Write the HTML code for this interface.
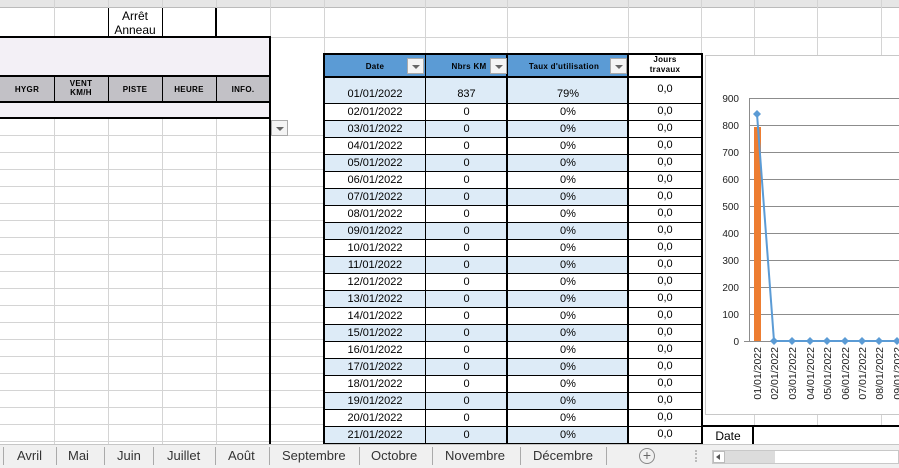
<!DOCTYPE html>
<html><head><meta charset="utf-8"><style>
*{margin:0;padding:0;box-sizing:border-box}
body{width:899px;height:468px;overflow:hidden;background:#fff;font-family:"Liberation Sans",Arial,sans-serif;position:relative}
.a{position:absolute}
.vl{position:absolute;width:1px;background:#d4d4d4}
.hl{position:absolute;height:1px;background:#d4d4d4}
.c{position:absolute;text-align:center;font-size:11px;color:#000;line-height:17px}
.hb{font-weight:bold;font-size:8px;letter-spacing:.3px}
.dd{position:absolute;width:17px;height:16px;background:#f4f4f4;border:1px solid #aaa}
.dd:after{content:"";position:absolute;left:4px;top:6px;border-left:4px solid transparent;border-right:4px solid transparent;border-top:4px solid #666}
.tab{position:absolute;top:448px;font-size:13px;color:#333}
.ts{position:absolute;top:447px;width:1px;height:18px;background:#aaa}
.col{position:absolute;top:104px;text-align:center;font-size:11px;line-height:17px}
</style></head><body>
<div class="a" style="left:0;top:0;width:899px;height:8px;background:#e6e6e6;border-bottom:1px solid #bbb"></div>
<div class="vl" style="left:54px;top:0;height:444px"></div>
<div class="vl" style="left:108px;top:0;height:444px"></div>
<div class="vl" style="left:162px;top:0;height:444px"></div>
<div class="vl" style="left:216px;top:0;height:444px"></div>
<div class="vl" style="left:270px;top:0;height:444px"></div>
<div class="vl" style="left:324px;top:0;height:444px"></div>
<div class="vl" style="left:425px;top:0;height:55px"></div>
<div class="vl" style="left:507px;top:0;height:55px"></div>
<div class="vl" style="left:628px;top:0;height:55px"></div>
<div class="vl" style="left:701px;top:0;height:55px"></div>
<div class="vl" style="left:754px;top:0;height:55px"></div>
<div class="vl" style="left:817px;top:0;height:55px"></div>
<div class="vl" style="left:881px;top:0;height:55px"></div>
<div class="hl" style="left:270px;top:37px;width:629px"></div>
<div class="a" style="left:0;top:135px;width:324px;height:309px;background:repeating-linear-gradient(#d4d4d4 0 1px,transparent 1px 17px)"></div>
<div class="a" style="left:108px;top:8px;width:1px;height:29px;background:#000"></div>
<div class="a" style="left:162px;top:8px;width:1px;height:29px;background:#000"></div>
<div class="a" style="left:215px;top:8px;width:2px;height:29px;background:#000"></div>
<div class="c" style="left:108px;top:9px;width:54px;font-size:12px;line-height:14px">Arrêt<br>Anneau</div>
<div class="a" style="left:0;top:36px;width:271px;height:83px;background:#f3f0f6;border:2px solid #000;border-left:none"></div>
<div class="a" style="left:0;top:75px;width:271px;height:28px;background:#c2c1c6;border-top:2px solid #000;border-bottom:2px solid #000;border-right:2px solid #000"></div>
<div class="a" style="left:54px;top:77px;width:1px;height:24px;background:#000"></div>
<div class="a" style="left:108px;top:77px;width:1px;height:24px;background:#000"></div>
<div class="a" style="left:162px;top:77px;width:1px;height:24px;background:#000"></div>
<div class="a" style="left:216px;top:77px;width:1px;height:24px;background:#000"></div>
<div class="c hb" style="left:0;top:81px;width:54px">HYGR</div>
<div class="c hb" style="left:54px;top:79px;width:54px;line-height:9px">VENT<br>KM/H</div>
<div class="c hb" style="left:108px;top:81px;width:54px">PISTE</div>
<div class="c hb" style="left:162px;top:81px;width:54px">HEURE</div>
<div class="c hb" style="left:216px;top:81px;width:54px">INFO.</div>
<div class="a" style="left:269px;top:118px;width:2px;height:326px;background:#000"></div>
<div class="dd" style="left:271px;top:120px"></div>
<div class="a" style="left:323px;top:53px;width:380px;height:391px;border:2px solid #000;border-bottom:none"></div>
<div class="a" style="left:325px;top:55px;width:303px;height:22px;background:#5b9bd5"></div>
<div class="a" style="left:325px;top:77px;width:303px;height:26px;background:#ddebf7"></div>
<div class="a" style="left:325px;top:120px;width:303px;height:324px;background:repeating-linear-gradient(#ddebf7 0 17px,#fff 17px 34px)"></div>
<div class="a" style="left:425px;top:55px;width:1px;height:389px;background:#000"></div>
<div class="a" style="left:506px;top:55px;width:2px;height:389px;background:#000"></div>
<div class="a" style="left:627px;top:55px;width:2px;height:389px;background:#000"></div>
<div class="a" style="left:325px;top:76px;width:376px;height:2px;background:#000"></div>
<div class="dd" style="left:407px;top:58px"></div>
<div class="dd" style="left:490px;top:58px"></div>
<div class="dd" style="left:610px;top:58px"></div>
<div class="c hb" style="left:325px;top:58px;width:100px">Date</div>
<div class="c hb" style="left:426px;top:58px;width:86px">Nbrs KM</div>
<div class="c hb" style="left:508px;top:58px;width:112px">Taux d'utilisation</div>
<div class="c hb" style="left:629px;top:55px;width:72px;line-height:10px">Jours<br>travaux</div>
<div class="c" style="left:325px;top:86px;width:100px">01/01/2022</div><div class="c" style="left:426px;top:86px;width:81px">837</div><div class="c" style="left:508px;top:86px;width:120px">79%</div><div class="c" style="left:629px;top:81px;width:72px">0,0</div>
<div class="a" style="left:325px;top:103px;width:376px;height:341px;background:repeating-linear-gradient(#000 0 1px,transparent 1px 17px)"></div>
<div class="col" style="left:325px;width:100px">02/01/2022<br>03/01/2022<br>04/01/2022<br>05/01/2022<br>06/01/2022<br>07/01/2022<br>08/01/2022<br>09/01/2022<br>10/01/2022<br>11/01/2022<br>12/01/2022<br>13/01/2022<br>14/01/2022<br>15/01/2022<br>16/01/2022<br>17/01/2022<br>18/01/2022<br>19/01/2022<br>20/01/2022<br>21/01/2022</div>
<div class="col" style="left:426px;width:81px">0<br>0<br>0<br>0<br>0<br>0<br>0<br>0<br>0<br>0<br>0<br>0<br>0<br>0<br>0<br>0<br>0<br>0<br>0<br>0</div>
<div class="col" style="left:508px;width:120px">0%<br>0%<br>0%<br>0%<br>0%<br>0%<br>0%<br>0%<br>0%<br>0%<br>0%<br>0%<br>0%<br>0%<br>0%<br>0%<br>0%<br>0%<br>0%<br>0%</div>
<div class="col" style="left:629px;width:72px;top:103px">0,0<br>0,0<br>0,0<br>0,0<br>0,0<br>0,0<br>0,0<br>0,0<br>0,0<br>0,0<br>0,0<br>0,0<br>0,0<br>0,0<br>0,0<br>0,0<br>0,0<br>0,0<br>0,0<br>0,0</div>
<div class="vl" style="left:754px;top:415px;height:12px"></div>
<div class="vl" style="left:817px;top:415px;height:12px"></div>
<div class="vl" style="left:881px;top:415px;height:12px"></div>
<svg class="a" style="left:705px;top:55px" width="194" height="361">
<rect x="0.5" y="0.5" width="200" height="359" fill="#fff" stroke="#c8c8c8"/>
<g stroke="#8c8c8c" stroke-width="1">
<line x1="44" y1="43.5" x2="194" y2="43.5"/><line x1="44" y1="70.5" x2="194" y2="70.5"/><line x1="44" y1="97.5" x2="194" y2="97.5"/><line x1="44" y1="124.5" x2="194" y2="124.5"/><line x1="44" y1="151.5" x2="194" y2="151.5"/><line x1="44" y1="178.5" x2="194" y2="178.5"/><line x1="44" y1="205.5" x2="194" y2="205.5"/><line x1="44" y1="232.5" x2="194" y2="232.5"/><line x1="44" y1="259.5" x2="194" y2="259.5"/><line x1="39" y1="286.5" x2="194" y2="286.5"/>
<line x1="44.5" y1="43" x2="44.5" y2="286"/>
</g>
<g font-size="10" text-anchor="end" fill="#222" font-family="Liberation Sans,sans-serif">
<text x="34" y="47">900</text><text x="34" y="74">800</text><text x="34" y="101">700</text><text x="34" y="128">600</text><text x="34" y="155">500</text><text x="34" y="182">400</text><text x="34" y="209">300</text><text x="34" y="236">200</text><text x="34" y="263">100</text><text x="34" y="290">0</text>
</g>
<rect x="49" y="72" width="7" height="214" fill="#ed7d31"/>
<polyline points="52,59 69,286 87,286 105,286 122,286 140,286 157,286 174,286 192,286" fill="none" stroke="#5b9bd5" stroke-width="2"/>
<g fill="#5b9bd5">
<path d="M52 55l4 4-4 4-4-4z"/><path d="M69 282l4 4-4 4-4-4z"/><path d="M87 282l4 4-4 4-4-4z"/><path d="M105 282l4 4-4 4-4-4z"/><path d="M122 282l4 4-4 4-4-4z"/><path d="M140 282l4 4-4 4-4-4z"/><path d="M157 282l4 4-4 4-4-4z"/><path d="M174 282l4 4-4 4-4-4z"/><path d="M192 282l4 4-4 4-4-4z"/>
</g>
<g font-size="10.5" fill="#222" font-family="Liberation Sans,sans-serif" text-anchor="end">
<text transform="translate(56,292) rotate(-90)">01/01/2022</text>
<text transform="translate(73,292) rotate(-90)">02/01/2022</text>
<text transform="translate(91,292) rotate(-90)">03/01/2022</text>
<text transform="translate(109,292) rotate(-90)">04/01/2022</text>
<text transform="translate(126,292) rotate(-90)">05/01/2022</text>
<text transform="translate(144,292) rotate(-90)">06/01/2022</text>
<text transform="translate(161,292) rotate(-90)">07/01/2022</text>
<text transform="translate(178,292) rotate(-90)">08/01/2022</text>
<text transform="translate(196,292) rotate(-90)">09/01/2022</text>
</g>
</svg>
<div class="a" style="left:701px;top:425px;width:198px;height:2px;background:#000"></div>
<div class="a" style="left:752px;top:425px;width:2px;height:19px;background:#000"></div>
<div class="c" style="left:703px;top:428px;width:50px;font-size:12px">Date</div>
<div class="a" style="left:0;top:444px;width:899px;height:24px;background:#f0f0f0;border-top:1px solid #c6c6c6"></div>
<div class="ts" style="left:3px"></div>
<div class="tab" style="left:17px">Avril</div><div class="ts" style="left:56px"></div>
<div class="tab" style="left:68px">Mai</div><div class="ts" style="left:104px"></div>
<div class="tab" style="left:117px">Juin</div><div class="ts" style="left:153px"></div>
<div class="tab" style="left:167px">Juillet</div><div class="ts" style="left:215px"></div>
<div class="tab" style="left:228px">Août</div><div class="ts" style="left:269px"></div>
<div class="tab" style="left:282px">Septembre</div><div class="ts" style="left:359px"></div>
<div class="tab" style="left:371px">Octobre</div><div class="ts" style="left:432px"></div>
<div class="tab" style="left:445px">Novembre</div><div class="ts" style="left:520px"></div>
<div class="tab" style="left:533px">Décembre</div><div class="ts" style="left:606px"></div>
<div class="a" style="left:639px;top:448px;width:16px;height:16px;border:1px solid #888;border-radius:50%;text-align:center;line-height:13px;font-size:14px;color:#666">+</div>
<div class="a" style="left:695px;top:450px;width:2px;height:12px;border-left:2px dotted #bbb"></div>
<div class="a" style="left:712px;top:450px;width:187px;height:14px;background:#fff;border:1px solid #c8c8c8"></div>
<div class="a" style="left:713px;top:451px;width:62px;height:12px;background:#dcdcdc"></div>
<div class="a" style="left:713px;top:451px;width:12px;height:12px;background:#fff;border:1px solid #bbb"></div>
<div class="a" style="left:716px;top:454px;border-top:3px solid transparent;border-bottom:3px solid transparent;border-right:4px solid #555"></div>
</body></html>
